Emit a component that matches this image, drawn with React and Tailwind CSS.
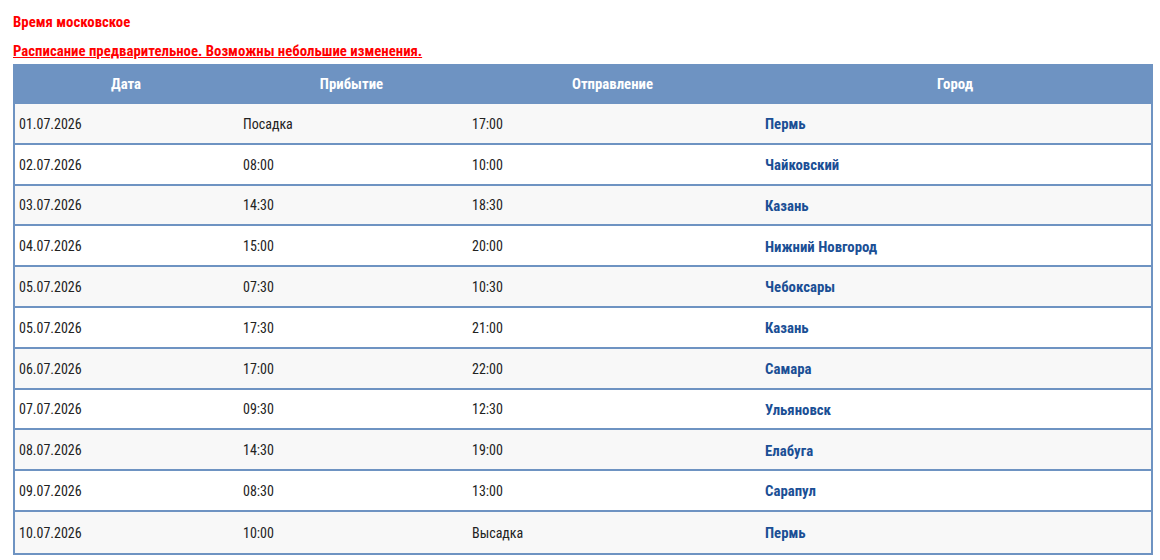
const rows = [
  ["01.07.2026", "Посадка", "17:00", "Пермь"],
  ["02.07.2026", "08:00", "10:00", "Чайковский"],
  ["03.07.2026", "14:30", "18:30", "Казань"],
  ["04.07.2026", "15:00", "20:00", "Нижний Новгород"],
  ["05.07.2026", "07:30", "10:30", "Чебоксары"],
  ["05.07.2026", "17:30", "21:00", "Казань"],
  ["06.07.2026", "17:00", "22:00", "Самара"],
  ["07.07.2026", "09:30", "12:30", "Ульяновск"],
  ["08.07.2026", "14:30", "19:00", "Елабуга"],
  ["09.07.2026", "08:30", "13:00", "Сарапул"],
  ["10.07.2026", "10:00", "Высадка", "Пермь"],
];

export default function App() {
  return (
    <div
      className="w-[1160px] h-[560px] bg-white px-[13px] pt-[12px] text-[14px] text-[#222] font-[Roboto,sans-serif] [font-stretch:75%]"
    >
      <div className="font-bold text-[14.8px] text-[#ff0000] leading-[20px]">Время московское</div>
      <div className="mt-[9px] font-bold text-[14.8px] text-[#ff0000] underline leading-[20px]">
        Расписание предварительное. Возможны небольшие изменения.
      </div>
      <div className="mt-[3px] w-[1140px] border-x-2 border-b-2 border-[#6e93c2]">
        <div className="grid grid-cols-[222px_229px_293px_392px] h-[40px] bg-[#6e93c2] items-center text-white font-bold text-[14.8px] text-center">
          <div>Дата</div>
          <div>Прибытие</div>
          <div>Отправление</div>
          <div>Город</div>
        </div>
        {rows.map((r, i) => (
          <div
            key={i}
            className={`grid grid-cols-[222px_229px_293px_392px] h-[40.8px] pt-[2px] items-center ${i < rows.length - 1 ? "border-b-2 border-[#6e93c2]" : ""} ${i % 2 === 0 ? "bg-[#f8f8f8]" : "bg-white"}`}
          >
            <div className="pl-[4px]">{r[0]}</div>
            <div className="pl-[6px]">{r[1]}</div>
            <div className="pl-[6px]">{r[2]}</div>
            <div className="pl-[6px] font-bold text-[14.8px] text-[#1b4f95]">{r[3]}</div>
          </div>
        ))}
      </div>
    </div>
  );
}
